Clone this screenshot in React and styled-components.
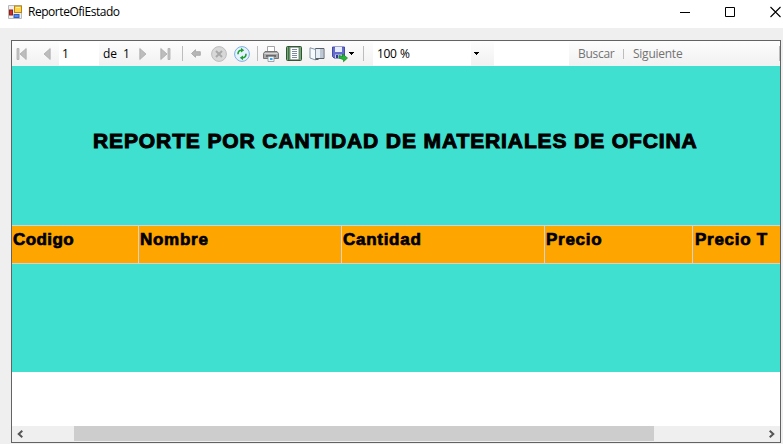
import React from "react";
import styled, { createGlobalStyle } from "styled-components";

const Global = createGlobalStyle`
  * { box-sizing: border-box; }
  html, body, #root { height: 100%; }
  body { margin: 0; overflow: hidden; font-family: "Open Sans", "Noto Sans", sans-serif; font-size: 12px; color: #000; }
`;
const Window = styled.div`
  display: flex;
  flex-direction: column;
  width: 783px;
  height: 444px;
  background: #efefef;
`;
const TitleBar = styled.header`
  display: flex;
  align-items: center;
  flex: 0 0 28px;
  padding: 0 0 4px 8px;
  background: #fff;
  overflow: hidden;
`;
const WindowTitle = styled.span`
  flex: 1;
  margin-left: 6px;
  font-size: 12px;
  line-height: 16px;
  letter-spacing: -0.46px;
  white-space: nowrap;
`;
const Controls = styled.div`
  display: flex;
  align-items: center;
  gap: 35px;
  margin-right: 2px;
`;
const Icon = styled.svg`
  display: block;
  flex: none;
  overflow: visible;
`;
const Viewer = styled.main`
  display: flex;
  flex-direction: column;
  width: 770px;
  height: 403px;
  margin: 12px 0 0 11px;
  border: 1px solid #636363;
  background: #fff;
`;
const Toolbar = styled.div`
  display: flex;
  align-items: center;
  flex: 0 0 25px;
  background: linear-gradient(#fdfdfd, #f1f1f1);
  overflow: hidden;
`;
const Slot = styled.div`
  display: flex;
  align-items: center;
  flex: 0 0 ${(p) => p.$w}px;
  height: 24px;
  white-space: nowrap;
`;
const Field = styled(Slot)`
  padding-left: ${(p) => p.$pad || 0}px;
  background: #fff;
`;
const Label = styled.span`
  line-height: 16px;
  font-size: 12px;
  letter-spacing: ${(p) => p.$track || 0}px;
  word-spacing: ${(p) => p.$words || 0}px;
  color: ${(p) => (p.$muted ? "#737373" : "#000")};
`;
const Divider = styled.i`
  width: 1px;
  height: ${(p) => p.$h || 15}px;
  background: #bdbdbd;
`;
const Report = styled.section`
  flex: 0 0 306px;
  background: #40e0d0;
  font-family: "Liberation Sans", Arial, sans-serif;
  font-weight: bold;
  overflow: hidden;
`;
const Heading = styled.h1`
  height: 159px;
  margin: 0;
  padding: 62px 0 0 81px;
  font-size: 21px;
  line-height: 26px;
  letter-spacing: 0.89px;
  white-space: nowrap;
  -webkit-text-stroke: 1px #000;
`;
const HeaderRow = styled.div`
  display: grid;
  grid-template-columns: 127px 203px 203px 148px 87px;
  height: 39px;
  border: solid #d3d3d3;
  border-width: 1px 0;
  background: #ffa500;
`;
const HeaderCell = styled.div`
  padding: 4px 0 0 1px;
  border-right: 1px solid #d3d3d3;
  font-size: 17px;
  line-height: 20px;
  letter-spacing: 0.72px;
  white-space: nowrap;
  -webkit-text-stroke: 0.7px #000;
  &:nth-child(1) { letter-spacing: 0.42px; }
  &:last-child { border-right: 0; padding-left: 2px; }
`;
const Blank = styled.div`
  flex: 1;
`;
const Scrollbar = styled.div`
  display: grid;
  grid-template-columns: 62px 580px 1fr;
  flex: 0 0 16px;
  background: #efefef;
`;
const Thumb = styled.div`
  height: 15px;
  background: #cdcdcd;
`;
const Arrow = styled.div`
  display: flex;
  align-items: center;
  justify-content: ${(p) => (p.$right ? "flex-end" : "flex-start")};
  height: 15px;
  padding: 0 5px;
`;

const AppIcon = () => (
  <Icon width="14" height="14" viewBox="0 0 14 14">
    <path d="M.5.5h13v13H.5z" fill="#eee" stroke="#b8b8b8" />
    <rect x="1.5" y="5" width="3" height="5" fill="#cf2d24" stroke="#8e221b" />
    <rect x="6.5" y="1" width="7" height="6.5" fill="#ffd34a" stroke="#b78618" />
    <path d="M8 2.5h4" stroke="#fff2b0" />
    <rect x="6" y="9.5" width="5" height="3" fill="#518df0" stroke="#315dc0" />
  </Icon>
);
const Nav = ({ back, bar }) => (
  <Icon width="11" height="12" viewBox="0 0 11 12">
    <g transform={back ? "matrix(-1 0 0 1 11 0)" : undefined}>
      <path d="M.8.5v11L7 6z" fill="#bdbdbd" stroke="#ababab" strokeWidth=".8" />
      {bar && <path d="M8 .5h2v11H8z" fill="#c5c5c5" stroke="#adadad" strokeWidth=".8" />}
    </g>
  </Icon>
);
const BackIcon = () => (
  <Icon width="10" height="9" viewBox="0 0 10 9">
    <path d="M.5 4.5l4-3.8v2h4.8v3.6H4.5v2z" fill="#b6b6b6" stroke="#a1a1a1" strokeWidth=".8" />
  </Icon>
);
const StopIcon = () => (
  <Icon width="16" height="16" viewBox="0 0 16 16">
    <circle cx="8" cy="8" r="7.4" fill="#d8d8d8" stroke="#bdbdbd" />
    <path d="M5 5l6 6m0-6l-6 6" stroke="#a8a8a8" strokeWidth="2" />
  </Icon>
);
const RefreshIcon = () => (
  <Icon width="16" height="16" viewBox="0 0 16 16">
    <circle cx="8" cy="8" r="7.4" fill="#e6f2ff" stroke="#7faee0" />
    <path d="M4 8.2c0-2.6 1-4 3.5-4M12 7.8c0 2.6-1 4-3.5 4" fill="none" stroke="#1fa02f" strokeWidth="1.6" />
    <path d="M7 1.8l3.2 2.4L7 6.6zM9 9.4l-3.2 2.4L9 14.2z" fill="#1fa02f" />
  </Icon>
);
const PrintIcon = () => (
  <Icon width="16" height="16" viewBox="0 0 16 16">
    <path d="M4.5 6V.5h7V6" fill="#fff" stroke="#a4a4a4" />
    <path d="M2 5.5h12l1.5 2v5H.5v-5z" fill="#a9a9a9" stroke="#747474" />
    <path d="M1.5 7.5h13" stroke="#d8d8d8" />
    <path d="M3 10h10" stroke="#555" strokeWidth="1.5" />
    <path d="M5 10.5h6v5H5z" fill="#eff8ff" stroke="#8a9299" strokeWidth=".8" />
    <path d="M7 13h2.5" stroke="#3ba4e8" strokeWidth="2" />
  </Icon>
);
const LayoutIcon = () => (
  <Icon width="16" height="15" viewBox="0 0 16 15">
    <rect x=".5" y=".5" width="15" height="14" rx="1" fill="#7ca677" stroke="#2c5632" />
    <path d="M2.5 1v13" stroke="#3f7544" />
    <path d="M4 1.2h9v12.6H4z" fill="#fff" stroke="#526659" strokeWidth=".7" />
    <path d="M6 3.5h5M6 5.5h5M6 7.5h5M6 9.5h5M6 11.5h5" stroke="#7c8ba1" />
  </Icon>
);
const SetupIcon = () => (
  <Icon width="16" height="14" viewBox="0 0 16 14">
    <path d="M6.5 1.5H15v10H6.5z" fill="#e6edf5" stroke="#596168" />
    <path d="M12.5 2v9" stroke="#bdc8d4" strokeWidth="3" />
    <path d="M1 .8l5.5 1.7V13L1 11z" fill="#f7fafc" stroke="#8496a6" />
    <path d="M6.5 11.5h3V13h-3z" fill="#596168" />
  </Icon>
);
const SaveIcon = () => (
  <Icon width="16" height="16" viewBox="0 0 16 16">
    <path d="M.5 1h12v11H2l-1.5-1.5z" fill="#646dce" stroke="#454ba8" />
    <path d="M3 1h7v5H3z" fill="#e7eefb" />
    <path d="M3 8.5h7V12H3z" fill="#c8cfe7" />
    <path d="M4 9h2v3H4z" fill="#343a91" />
    <path d="M7 9.5l3.5 1V8l5 4-4 3.7v-2L7 12z" fill="#25b535" stroke="#128322" strokeWidth=".7" />
  </Icon>
);
const Caret = () => (
  <Icon width="5" height="3" viewBox="0 0 5 3" shapeRendering="crispEdges">
    <path d="M0 0h5v1H4v1H3v1H2V2H1V1H0z" />
  </Icon>
);
const Chevron = ({ right }) => (
  <Icon width="6" height="8" viewBox="0 0 6 8">
    <path d={right ? "M.7.7L4.3 4 .7 7.3" : "M5.3.7L1.7 4l3.6 3.3"} fill="none" stroke="#555" strokeWidth="2" />
  </Icon>
);

const columns = ["Codigo", "Nombre", "Cantidad", "Precio", "Precio T"];

export default function App() {
  return (
    <Window>
      <Global />
      <TitleBar>
        <AppIcon />
        <WindowTitle>ReporteOfiEstado</WindowTitle>
        <Controls>
          <Icon width="10" height="10"><path d="M0 5.5h10" stroke="#000" /></Icon>
          <Icon width="10" height="10"><path d="M.5.5h9v9h-9z" fill="none" stroke="#000" /></Icon>
          <Icon width="11" height="10"><path d="M.5 0l10 10m0-10l-10 10" stroke="#000" strokeWidth="1.1" /></Icon>
        </Controls>
      </TitleBar>
      <Viewer>
        <Toolbar>
          <Slot $w={4} />
          <Slot $w={24}><Nav back bar /></Slot>
          <Slot $w={19}><Nav back /></Slot>
          <Field $w={40} $pad={3}><Label>1</Label></Field>
          <Slot $w={4} />
          <Slot $w={20}><Label $track={-0.2}>de</Label></Slot>
          <Slot $w={16}><Label>1</Label></Slot>
          <Slot $w={21}><Nav /></Slot>
          <Slot $w={22}><Nav bar /></Slot>
          <Slot $w={9}><Divider /></Slot>
          <Slot $w={20}><BackIcon /></Slot>
          <Slot $w={23}><StopIcon /></Slot>
          <Slot $w={23}><RefreshIcon /></Slot>
          <Slot $w={6}><Divider /></Slot>
          <Slot $w={23}><PrintIcon /></Slot>
          <Slot $w={23}><LayoutIcon /></Slot>
          <Slot $w={23}><SetupIcon /></Slot>
          <Slot $w={17}><SaveIcon /></Slot>
          <Slot $w={14}><Caret /></Slot>
          <Slot $w={10}><Divider /></Slot>
          <Field $w={98} $pad={4}><Label $track={-0.4} $words={1}>100 %</Label></Field>
          <Slot $w={23}><Slot $w={3} /><Caret /></Slot>
          <Field $w={75} />
          <Slot $w={9} />
          <Slot $w={45}><Label $muted $track={-0.3}>Buscar</Label></Slot>
          <Slot $w={10}><Divider $h={10} /></Slot>
          <Slot $w={146}><Label $muted $track={-0.25}>Siguiente</Label></Slot>
          <Divider />
        </Toolbar>
        <Report>
          <Heading>REPORTE POR CANTIDAD DE MATERIALES DE OFCINA</Heading>
          <HeaderRow>{columns.map((c) => <HeaderCell key={c}>{c}</HeaderCell>)}</HeaderRow>
        </Report>
        <Blank />
        <Scrollbar>
          <Arrow><Chevron /></Arrow>
          <Thumb />
          <Arrow $right><Chevron right /></Arrow>
        </Scrollbar>
      </Viewer>
    </Window>
  );
}
